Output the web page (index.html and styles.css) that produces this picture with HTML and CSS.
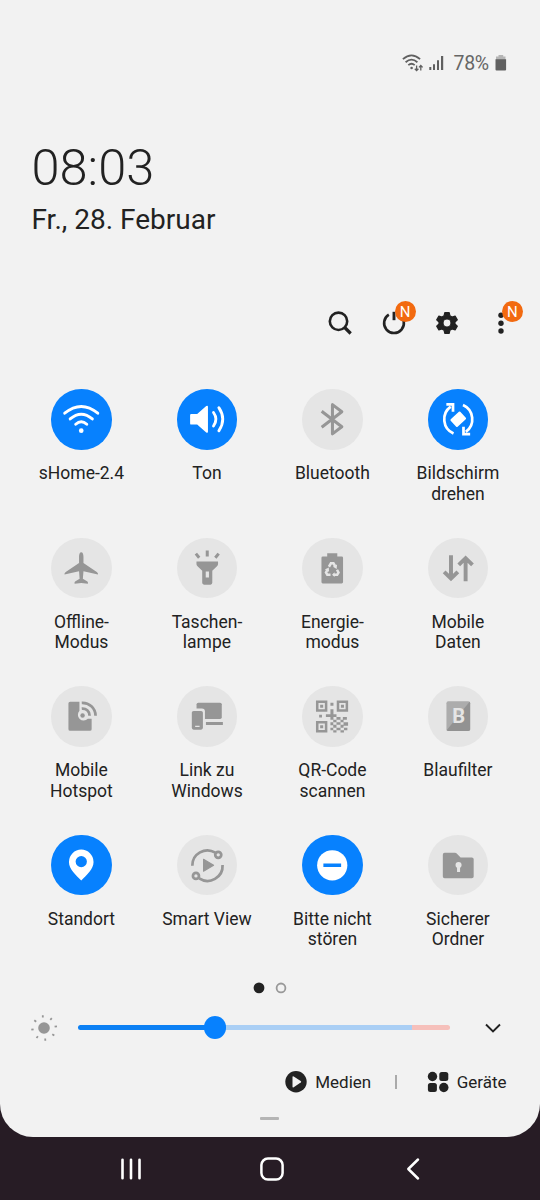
FILE: index.html
```html
<!DOCTYPE html>
<html lang="de">
<head>
<meta charset="utf-8">
<title>Schnelleinstellungen</title>
<link rel="stylesheet" href="styles.css">
</head>
<body>
<main class="panel">
  <div class="status">
    <svg class="status-wifi" width="22" height="20" viewBox="0 0 22 20" fill="none" stroke="#606060" stroke-width="1.8"><path d="M.9 6.200Q9.500-1.400 18.100 6.200M3.600 9.200Q9.500 4 15.400 9.200M6.300 12.100Q9.500 9.400 12.700 12.100"/><circle cx="9.600" cy="15" r="1.300" fill="#606060" stroke="none"/><path stroke-width="1.300" d="M14.600 12.500v5M12.800 15.700l1.800 1.900 1.800-1.900M18.800 17.500v-5M17 14.400l1.800-1.900 1.800 1.900"/></svg>
    <svg class="status-signal" width="15" height="16" viewBox="0 0 15 16" fill="#606060"><path d="M.3 12h2v3h-2zM4 9.200h2V15H4zM8 5.200h2V15H8zM12 1h2.200v14H12z"/></svg>
    <span class="status-text">78%</span>
    <svg class="status-battery" width="12" height="17" viewBox="0 0 12 17"><path fill="#b5b5b5" d="M3.500 0h4.700v1.500h2.300V6H1V1.500h2.500z"/><path fill="#606060" d="M.5 4.300h10.600v10.200q0 1-1 1H1.500q-1 0-1-1z"/></svg>
  </div>
  <div class="time">08:03</div>
  <div class="date">Fr., 28. Februar</div>

  <div class="actions">
    <div class="action"><svg viewBox="0 0 30 30" fill="none" stroke="#222"><circle cx="13.500" cy="13.300" r="8.700" stroke-width="2.600"/><path stroke-width="3.200" d="M19.700 19.500l6 6"/></svg></div>
    <div class="action"><svg viewBox="0 0 30 30" fill="none" stroke="#222" stroke-width="2.600"><path d="M9.800 6.700A9.900 9.900 0 1 0 20.200 6.700"/><path stroke-width="2.900" d="M15 3.800v8.400"/></svg><span class="badge">N</span></div>
    <div class="action"><svg viewBox="0 0 30 30"><path fill="#222" fill-rule="evenodd" stroke="#222" stroke-width="1.200" stroke-linejoin="round" d="M12.800 4.700h4.400l.7 3 2.200 1.300 3-.9 2.200 3.800-2.300 2.100v2l2.300 2.100-2.200 3.800-3-.9-2.200 1.300-.7 3h-4.400l-.7-3L9.900 21l-3 .9-2.200-3.800L7 16v-2l-2.300-2.100 2.200-3.800 3 .9 2.200-1.300zM15 11a4 4 0 1 0 0 8 4 4 0 0 0 0-8z"/></svg></div>
    <div class="action"><svg viewBox="0 0 30 30" fill="#222"><circle cx="15" cy="7.200" r="2.700"/><circle cx="15" cy="15.200" r="2.700"/><circle cx="15" cy="23" r="2.700"/></svg><span class="badge">N</span></div>
  </div>

  <div class="tiles">
    <div class="tile on"><svg class="disc" viewBox="0 0 60 60" fill="none" stroke="currentColor" stroke-width="2.900" stroke-linecap="round"><path d="M13.600 24Q30 10.500 46.400 24M19 29.700Q30 20.200 41 29.700M24.500 35Q30 29.800 35.500 35"/><circle cx="30" cy="41.300" r="2.300" fill="currentColor" stroke="none"/></svg><span>sHome-2.4</span></div>
    <div class="tile on"><svg class="disc" viewBox="0 0 60 60" fill="none" stroke="currentColor" stroke-width="2.800"><path fill="currentColor" stroke="none" d="M14.200 24.700h5.800l9-7.800q1.700-1 1.700.8v24.600q0 1.800-1.700.8L20 35.300h-5.800q-1.200 0-1.200-1.200v-8.200q0-1.200 1.200-1.200z"/><path stroke-linecap="round" d="M36.200 23.300Q41 30 36.200 36.700M41.500 18.500Q49.300 30 41.500 41.500"/></svg><span>Ton</span></div>
    <div class="tile"><svg class="disc" viewBox="0 0 60 60" fill="none" stroke="currentColor" stroke-width="3" stroke-linejoin="round"><path d="M19.500 22l20 15.500-9.300 7V15.500l9.300 7-20 15.500"/></svg><span>Bluetooth</span></div>
    <div class="tile on"><svg class="disc" viewBox="0 0 60 60" fill="none" stroke="currentColor" stroke-width="2.700"><path d="M25.300 44.200A15.500 15.500 0 0 1 22.500 17.500M34.700 15.800A15.500 15.500 0 0 1 37.500 42.500"/><path d="M18.200 15.300h6.600v7.300M41.800 44.700h-6.600v-7.300"/><rect x="23.500" y="25" width="13" height="10" rx="1" transform="rotate(-43 30 30)" fill="currentColor" stroke="none"/></svg><span>Bildschirm<br>drehen</span></div>

    <div class="tile"><svg class="disc" viewBox="0 0 60 60" fill="currentColor"><path d="M30 14.200c1.400 0 2.200 2 2.200 4.500v6.200l13.200 8.700q1.600 1.100 1.200 2.700L32.200 33l-.6 7.500 4.500 2.700q.8.600.5 2.200L30 44.600l-6.600.8q-.3-1.600.5-2.200l4.500-2.700-.6-7.500-14.400 3.300q-.4-1.600 1.200-2.700l13.200-8.700v-6.200c0-2.500.8-4.500 2.200-4.500z"/></svg><span>Offline-<br>Modus</span></div>
    <div class="tile"><svg class="disc" viewBox="0 0 60 60" fill="currentColor"><path fill-rule="evenodd" d="M19.300 23.400h21.400v2.300q0 1.200-.8 2L35 32.500v12q0 1.800-1.800 1.800h-6.400Q25 46.300 25 44.500v-12l-4.900-4.800q-.8-.8-.8-2zM28.500 33.300v5.800h3.200v-5.800z"/><path fill="none" stroke="currentColor" stroke-width="3" d="M30 12.500v5.800M18.700 15.500l3.300 4M41.300 15.500l-3.300 4"/></svg><span>Taschen-<br>lampe</span></div>
    <div class="tile"><svg class="disc" viewBox="0 0 60 60"><path fill="currentColor" d="M25 15.200h10v3.200h4.400q1.300 0 1.300 1.300v24q0 1.300-1.300 1.300H20.600q-1.300 0-1.300-1.300v-24q0-1.300 1.300-1.300H25z"/><g fill="none" stroke="#e5e5e5" stroke-width="2.500"><path d="M26.700 28.500l2-3.400h2.500l1.700 2.900M34.700 31.500l1.500 2.700-1.300 2.300h-3.500M28.300 36.500h-3.200l-1.300-2.300 1.700-3"/></g><path fill="#e5e5e5" d="M34.700 26.300l-.3 4.400-3.700-2.200zM32.300 34v4.800l-2.500-2.400zM22.700 31.300l3.900-2.100.2 4.300z"/></svg><span>Energie-<br>modus</span></div>
    <div class="tile"><svg class="disc" viewBox="0 0 60 60" fill="none" stroke="currentColor" stroke-width="3.900"><path d="M22.800 17v23.200M16 33.600l6.800 6.600 6.800-6.600M37.300 43V20M30.500 26.600l6.800-6.600 6.800 6.600"/></svg><span>Mobile<br>Daten</span></div>

    <div class="tile"><svg class="disc" viewBox="0 0 60 60"><path fill="currentColor" d="M19 15.500h9.200v9.100a5.600 5.600 0 1 0 8.300 7.800h3.800v10.400q0 1.700-1.700 1.700H19q-1.700 0-1.700-1.700V17.200q0-1.700 1.700-1.700z"/><circle cx="31.300" cy="29.300" r="2.200" fill="currentColor"/><path fill="none" stroke="currentColor" stroke-width="2.700" d="M30.500 22.400a7 7 0 0 1 7.800 7M30.500 16.700a13 13 0 0 1 13.700 12.800"/></svg><span>Mobile<br>Hotspot</span></div>
    <div class="tile"><svg class="disc" viewBox="0 0 60 60"><rect x="19.400" y="16.500" width="25" height="16.200" rx="1.700" fill="currentColor"/><rect x="12" y="22.300" width="15.700" height="23" rx="3" fill="#e5e5e5"/><rect x="14.700" y="24.700" width="11" height="18.600" rx="1.800" fill="currentColor"/><path stroke="currentColor" stroke-width="2.900" d="M28.700 37.200h16.800"/><path stroke="#e5e5e5" stroke-width="1.400" d="M18 40h4.400"/></svg><span>Link zu<br>Windows</span></div>
    <div class="tile"><svg class="disc" viewBox="0 0 60 60"><g fill="none" stroke="currentColor" stroke-width="2.500"><path d="M15.100 15.600h8.800v8.800h-8.800zM35.700 15.600h8.800v8.800h-8.800zM15.100 36h8.800v8.800h-8.800z"/></g><path fill="currentColor" d="M18 18.500h3v3h-3zM38.600 18.500h3v3h-3zM18 38.900h3v3h-3zM28.200 16.700h3v3h-3zM28.200 23h3v5h3v2.800h-3v2.600h-3v-2.600h-4.500V28h4.500zM17 28.600h2.800v2.700H17zM34.200 30.800h4v2.600h-4zM40.500 30.800h4v2.600h-4zM31 33.400h3.200V36H31zM38.200 33.400h3V36h-3zM28.200 36H31v3h-2.800zM34.200 36h4v2.500h-4zM41.200 36h4.500v3.500h-4.500zM31 38.500h3.200v3H31zM38.200 38.500h3v3h-3zM28.200 41.500H31v2.300h-2.800zM34.200 41.500h4v2.300h-4zM31 43.800h3.200V46H31zM38.200 43.800h3.400V46h-3.400zM41.600 41.500H45v2.300h-3.400z"/></svg><span>QR-Code<br>scannen</span></div>
    <div class="tile"><svg class="disc" viewBox="0 0 60 60"><rect x="18.300" y="15.200" width="23.500" height="29.500" rx="1.800" fill="#acacac"/><path fill="#929292" d="M41.800 17v25.900q0 1.800-1.800 1.800H20.100q-1 0-1.600-.8L41.200 15.700q.6.500.6 1.300z"/><text x="30.400" y="36.800" class="filter-letter">B</text></svg><span>Blaufilter</span></div>

    <div class="tile on"><svg class="disc" viewBox="0 0 60 60"><path fill="currentColor" fill-rule="evenodd" d="M30 14.500a12.200 12.200 0 0 0-12.200 12.200C17.800 34 25 40 30 45c5-5 12.200-11 12.200-18.300A12.200 12.200 0 0 0 30 14.500zm0 6.300a5.600 5.600 0 1 1 0 11.200 5.600 5.600 0 0 1 0-11.200z"/></svg><span>Standort</span></div>
    <div class="tile"><svg class="disc" viewBox="0 0 60 60" fill="none" stroke="currentColor" stroke-width="2.700"><path d="M15.200 30.500A15 15 0 0 1 38 17.500M45.200 29.700A15 15 0 0 1 22 43"/><circle cx="40.900" cy="19.700" r="3"/><circle cx="18.800" cy="40.600" r="3"/><path fill="currentColor" stroke-width="1" stroke-linejoin="round" d="M26.300 24v12l10-6z"/></svg><span>Smart View</span></div>
    <div class="tile on"><svg class="disc" viewBox="0 0 60 60"><circle cx="30" cy="30" r="15" fill="currentColor"/><path stroke="#0781fe" stroke-width="3.600" d="M21.200 30h17.600"/></svg><span>Bitte nicht<br>stören</span></div>
    <div class="tile"><svg class="disc" viewBox="0 0 60 60"><path fill="currentColor" d="M16.500 17.700h10.300q1 0 1.700.7l3.800 3.800h11.200q1.800 0 1.800 1.800v17.200q0 1.800-1.800 1.800h-27q-1.800 0-1.800-1.800V19.500q0-1.800 1.800-1.800z"/><circle cx="30.300" cy="29.700" r="3" fill="#e5e5e5"/><path stroke="#e5e5e5" stroke-width="3" d="M30.300 30v6.800"/></svg><span>Sicherer<br>Ordner</span></div>
  </div>

  <div class="pages">
    <svg width="34" height="12" viewBox="0 0 34 12"><circle cx="6" cy="5.900" r="5.400" fill="#222"/><circle cx="28" cy="5.900" r="4.400" fill="none" stroke="#999" stroke-width="1.800"/></svg>
  </div>

  <div class="brightness">
    <svg class="sun" width="28" height="28" viewBox="0 0 28 28" fill="#969696"><circle cx="14" cy="14" r="5.800"/><path fill="none" stroke="#969696" stroke-width="1.800" d="M12.800 1.200v2.300M21.800 4.200l-1.500 1.600M27 12.400l-2.400.3M24.300 21.600l-2-1.300M15.300 26.800l-.1-2.300M6.500 24l1.400-1.700M1.300 15.700l2.300-.4M4.300 6.200l1.900 1.500"/></svg>
    <div class="slider"><div class="slider-fill"></div><div class="slider-rest"></div><div class="slider-warn"></div><div class="knob"></div></div>
    <svg class="chevron" width="18" height="12" viewBox="0 0 18 12"><path fill="none" stroke="#222" stroke-width="1.900" d="M2 2.500l7 7L16 2.500"/></svg>
  </div>

  <div class="links">
    <svg width="22" height="22" viewBox="0 0 22 22"><circle cx="11" cy="10.800" r="10.700" fill="#222"/><path fill="#f2f2f2" d="M7.500 6.100q0-1.300 1.200-.7l7 4.600q1 .8 0 1.600l-7 4.600q-1.200.6-1.200-.7z"/></svg>
    <span class="media">Medien</span><i class="divider"></i>
    <svg width="22" height="22" viewBox="0 0 22 22" fill="#222"><circle cx="5.500" cy="5.500" r="4.700"/><rect x="12.300" y="1" width="9" height="9" rx="2.500"/><rect x=".9" y="12" width="9" height="9" rx="2.500"/><circle cx="16.800" cy="16.500" r="4.700"/></svg>
    <span class="devices">Geräte</span>
  </div>
  <div class="handle"></div>
</main>
<nav class="nav">
  <svg width="28" height="28" viewBox="0 0 28 28"><path stroke="#fff" stroke-width="2.600" stroke-linecap="round" d="M5.500 4.700v18.500M14 4.700v18.500M22.500 4.700v18.500"/></svg>
  <svg width="28" height="28" viewBox="0 0 28 28"><rect x="3.400" y="3.600" width="21.200" height="21" rx="6.500" fill="none" stroke="#fff" stroke-width="2.500"/></svg>
  <svg width="28" height="28" viewBox="0 0 28 28"><path fill="none" stroke="#fff" stroke-width="2.500" stroke-linecap="round" stroke-linejoin="round" d="M19 4.500L9.300 14l9.700 9.500"/></svg>
</nav>
</body>
</html>
```

FILE: styles.css
```css
* { box-sizing: border-box; }

body {
  margin: 0;
  width: 540px;
  height: 1200px;
  overflow: hidden;
  background: #271c25;
  color: #222;
  font-family: Roboto, sans-serif;
}

svg { display: block; flex: none; }

.panel {
  height: 1137px;
  display: flex;
  flex-direction: column;
  background: #f2f2f2;
  border-radius: 0 0 33px 33px;
}

.status {
  display: flex;
  align-items: center;
  height: 22px;
  margin: 52px 33px 0 402px;
  color: #666;
}
.status-signal { margin: 0 0 0 5px; }
.status-text { width: 42px; padding-left: 9.500px; font-size: 19.500px; letter-spacing: -0.3px; white-space: nowrap; }
.status-battery { margin-left: 9px; }

.time {
  margin: 64px 0 0 31.500px;
  height: 60px;
  font-size: 50.500px;
  line-height: 60px;
  font-weight: 300;
}
.date {
  margin: 4px 0 0 31.500px;
  height: 36px;
  font-size: 28px;
  line-height: 36px;
}

.actions {
  display: flex;
  gap: 23.600px;
  height: 30px;
  margin: 70px 0 0 325px;
}
.action { position: relative; width: 30px; height: 30px; }
.badge {
  position: absolute;
  left: 16px;
  top: -7px;
  width: 21px;
  height: 21px;
  border-radius: 50%;
  background: #f26a10;
  color: #fff;
  font-size: 15px;
  line-height: 22px;
  text-align: center;
}

.tiles {
  display: grid;
  grid-template-columns: repeat(4, 125.500px);
  grid-auto-rows: 148.500px;
  margin: 51px 0 0 18.700px;
}
.tile {
  display: flex;
  flex-direction: column;
  align-items: center;
  gap: 13px;
  font-size: 17.500px;
  line-height: 20.500px;
  text-align: center;
  white-space: nowrap;
}
.tile span { padding-top: 0.5px; }
.disc {
  width: 60.500px;
  height: 60.500px;
  border-radius: 50%;
  background: #e5e5e5;
  color: #969696;
}
.on .disc { background: #0781fe; color: #fff; }
.filter-letter { font: 700 20px Roboto, sans-serif; fill: #e5e5e5; text-anchor: middle; }

.pages {
  height: 12px;
  margin: -1px 0 0 252.600px;
}

.brightness {
  display: flex;
  align-items: center;
  height: 28px;
  margin: 20px 0 0 30px;
}
.slider { position: relative; display: flex; width: 372px; height: 4.500px; margin: 0 34px 1px 19.500px; }
.slider-fill { width: 137px; background: #0c80f4; border-radius: 3px 0 0 3px; }
.slider-rest { flex: 1; background: #aacff5; }
.slider-warn { width: 38px; background: #f6c0bb; border-radius: 0 3px 3px 0; }
.knob { position: absolute; left: 126px; top: -9px; width: 22.500px; height: 22.500px; border-radius: 50%; background: #0781fe; }

.links {
  display: flex;
  align-items: center;
  height: 22px;
  margin: 29px 0 0 284.700px;
  font-size: 17px;
}
.media { width: 56px; margin-left: 8.500px; }
.divider { width: 1.500px; height: 14px; margin: 0 30px 0 24px; background: #aaa; }
.devices { margin-left: 8px; }

.handle { width: 19px; height: 2.500px; margin: 24px 0 0 260px; background: #b5b5b5; border-radius: 1px; }

.nav {
  display: flex;
  align-items: center;
  gap: 112.800px;
  height: 63px;
  padding-left: 117px;
}
```
